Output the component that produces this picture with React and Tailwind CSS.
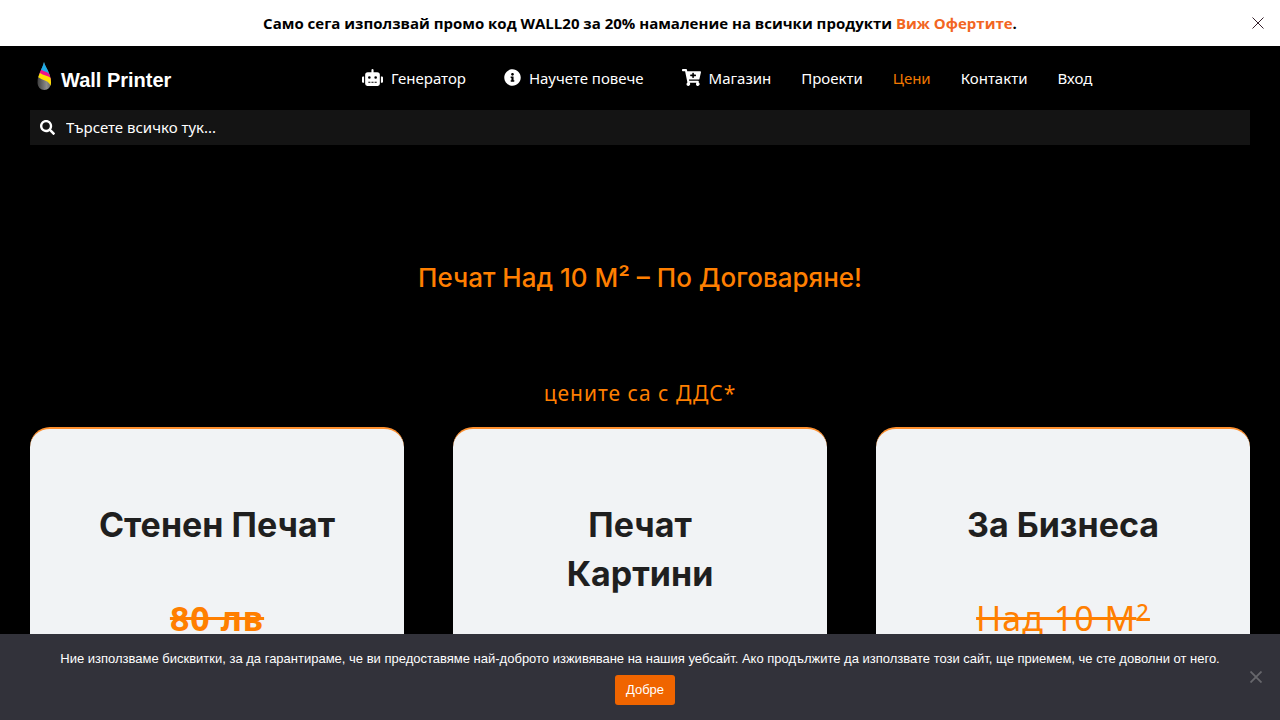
import { FaRobot, FaInfoCircle, FaCartPlus, FaSearch } from "react-icons/fa";

const NAV = [
  { label: "Генератор", icon: FaRobot, iconWidth: "w-[21px]" },
  { label: "Научете повече", icon: FaInfoCircle, iconWidth: "w-[17px]" },
  { label: "Магазин", icon: FaCartPlus, iconWidth: "w-[19px]" },
  { label: "Проекти" },
  { label: "Цени", active: true },
  { label: "Контакти" },
  { label: "Вход" },
];

function Cross({ className, width }) {
  return (
    <svg viewBox="0 0 12 12" className={className} fill="none" stroke="currentColor" strokeWidth={width} aria-hidden="true">
      <path d="M0.5 0.5 11.5 11.5M11.5 0.5 0.5 11.5" />
    </svg>
  );
}

function PromoBar() {
  return (
    <div className="flex h-[46px] items-center bg-white px-4 font-['Open_Sans',sans-serif] text-[15px] font-bold text-black">
      <p className="flex-1 pl-3 text-center">
        Само сега използвай промо код WALL20 за 20% намаление на всички продукти{" "}
        <a href="#offers" className="text-[#f26522]">Виж Офертите</a>.
      </p>
      <button type="button" aria-label="Затвори" className="text-[#35202b]">
        <Cross className="size-3" width="1" />
      </button>
    </div>
  );
}

function Logo() {
  return (
    <a href="#home" className="flex items-center gap-2 pl-[7px] font-['Liberation_Sans',sans-serif] text-[20px] font-bold text-white">
      <svg viewBox="0 0 16 30" className="mb-1 h-[30px] w-4 shrink-0" aria-hidden="true">
        <defs>
          <linearGradient id="ink" x1="0" x2="1">
            <stop offset="0" stopColor="#3c3c3c" />
            <stop offset="0.6" stopColor="#8c8c8c" />
            <stop offset="1" stopColor="#5a5a5a" />
          </linearGradient>
          <clipPath id="drop">
            <path d="M7 1C8 6 14 12 14 21.500C14 26 11 29 7.500 29C3.500 29 0.500 26 0.500 21.500C0.500 13 5.500 8 7 1Z" />
          </clipPath>
        </defs>
        <g clipPath="url(#drop)">
          <rect width="16" height="30" fill="url(#ink)" />
          <path d="M0 0H16V18C13 12 9 12 3 9Z" fill="#1cabe8" />
          <path d="M4 8.500C7 11 12 10 14 16L16 21C10 18 8 14 2 13Z" fill="#ee1289" />
          <path d="M3 12C7 15 13 14 16 20L13.500 25C12 19 6 20 1 16Z" fill="#ffdf00" />
        </g>
      </svg>
      <span className="pt-[3px]">Wall Printer</span>
    </a>
  );
}

function Header() {
  return (
    <header className="px-[30px]">
      <div className="flex h-16 items-center">
        <div className="w-[324px]"><Logo /></div>
        <nav className="flex items-center gap-[30px] text-[15px]">
          {NAV.map(({ label, icon: Icon, iconWidth, active }) => (
            <a
              key={label}
              href="#nav"
              className={`flex items-center whitespace-nowrap ${active ? "text-[#f07800]" : "text-white"}`}
            >
              {Icon && <Icon className={`mx-2 mb-0.5 h-[17px] shrink-0 ${iconWidth}`} aria-hidden="true" />}
              {label}
            </a>
          ))}
        </nav>
      </div>
      <label className="flex h-[35px] items-center gap-[11px] bg-[#141414] px-[10px] text-white">
        <FaSearch className="size-[15px] shrink-0" aria-hidden="true" />
        <input
          type="search"
          aria-label="Търсене"
          placeholder="Търсете всичко тук..."
          className="w-full bg-transparent text-[15px] outline-none placeholder:text-white"
        />
      </label>
    </header>
  );
}

function Card({ title, children }) {
  return (
    <article className="flex min-h-[420px] flex-col items-center rounded-[20px] border-t-2 border-[#ff9130] bg-[#f1f3f5] px-[60px] pt-[71px] text-center">
      <h2 className="min-h-[98px] font-[Inter,sans-serif] text-[34px] leading-[49px] font-bold text-[#1f1f1f]">{title}</h2>
      <div className="text-[34px] leading-[40px] tracking-[1px] text-[#ff7f00]">{children}</div>
    </article>
  );
}

function CookieBar() {
  return (
    <div className="fixed inset-x-0 bottom-0 flex min-h-[86px] items-center bg-[#32323a] px-4 font-['Liberation_Sans',sans-serif] text-[13px] text-white">
      <div className="flex flex-1 flex-col items-center gap-[6px]">
        <p className="leading-5">
          Ние използваме бисквитки, за да гарантираме, че ви предоставяме най-доброто изживяване на нашия уебсайт. Ако продължите да използвате този сайт, ще приемем, че сте доволни от него.
        </p>
        <button type="button" className="ml-[10px] h-[30px] rounded-[3px] bg-[#f06500] px-[11px]">Добре</button>
      </div>
      <button type="button" aria-label="Откажи" className="absolute right-[18px] text-[#67676c]">
        <Cross className="size-3" width="1.8" />
      </button>
    </div>
  );
}

export default function App() {
  return (
    <div lang="bg" className="min-h-screen bg-black font-['Noto_Sans',sans-serif]">
      <PromoBar />
      <Header />
      <main className="px-[30px] pb-24">
        <h1 className="pt-[113px] text-center font-[Inter,sans-serif] text-[26px] leading-10 font-medium text-[#ff7f00]">
          Печат Над 10 М² – По Договаряне!
        </h1>
        <p className="pt-[80px] text-center text-[21px] leading-[30px] tracking-[1px] text-[#ff7f00]">цените са с ДДС*</p>
        <div className="mt-[19px] grid grid-cols-3 gap-[49px]">
          <Card title="Стенен Печат">
            <del className="font-bold">80 лв</del>
          </Card>
          <Card title="Печат Картини" />
          <Card title="За Бизнеса">
            <del>Над 10 М<sup className="text-[22px] font-medium">2</sup></del>
          </Card>
        </div>
      </main>
      <CookieBar />
    </div>
  );
}
